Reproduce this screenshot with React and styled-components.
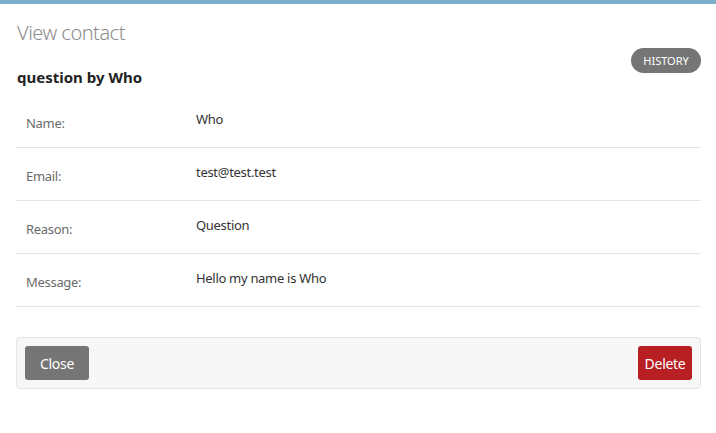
import React from "react";
import styled, { createGlobalStyle } from "styled-components";

const GlobalStyle = createGlobalStyle`
  html, body {
    margin: 0;
    padding: 0;
    background: #ffffff;
  }
  body {
    font-family: "Noto Sans", "Open Sans", sans-serif;
    color: #333333;
  }
`;

const rows = [
  { label: "Name:", value: "Who" },
  { label: "Email:", value: "test@test.test" },
  { label: "Reason:", value: "Question" },
  { label: "Message:", value: "Hello my name is Who" },
];

function App() {
  return (
    <>
      <GlobalStyle />
      <Modal>
        <TopBar />
        <Body>
          <Header>
            <Titles>
              <Title>View contact</Title>
              <Subtitle>question by Who</Subtitle>
            </Titles>
            <PillButton>History</PillButton>
          </Header>
          <Details>
            {rows.map((row) => (
              <Row key={row.label}>
                <Label>{row.label}</Label>
                <Value>{row.value}</Value>
              </Row>
            ))}
          </Details>
          <Footer>
            <Button $width="64px">Close</Button>
            <Button $danger $width="54px">Delete</Button>
          </Footer>
        </Body>
      </Modal>
    </>
  );
}

const Modal = styled.div`
  width: 716px;
  height: 433px;
  background: #ffffff;
`;

const TopBar = styled.div`
  height: 4px;
  background-color: #79aec9;
`;

const Body = styled.div`
  padding: 16px 15px 0 16px;
`;

const Header = styled.div`
  display: flex;
  justify-content: space-between;
  align-items: flex-start;
`;

const Titles = styled.div`
  display: flex;
  flex-direction: column;
  padding-left: 1px;
`;

const Title = styled.h2`
  margin: 0;
  font-size: 20px;
  line-height: 26px;
  font-weight: 300;
  letter-spacing: -0.5px;
  color: #8c8c8c;
`;

const Subtitle = styled.h3`
  margin: 21px 0 0 0;
  font-size: 15px;
  line-height: 20px;
  font-weight: 700;
  color: #222222;
`;

const PillButton = styled.button`
  margin-top: 28px;
  width: 70px;
  height: 25px;
  border: none;
  border-radius: 13px;
  background-color: #757575;
  color: #ffffff;
  font-family: inherit;
  font-size: 11px;
  font-weight: 400;
  text-transform: uppercase;
  padding: 0;
  cursor: pointer;
`;

const Details = styled.div`
  margin-top: 8px;
  display: flex;
  flex-direction: column;
`;

const Row = styled.div`
  display: grid;
  grid-template-columns: 170px 1fr;
  height: 52px;
  border-bottom: 1px solid #e5e5e5;
  font-size: 13px;
  line-height: 20px;
  letter-spacing: -0.3px;
`;

const Label = styled.div`
  padding: 18px 10px 0 10px;
  color: #6b6b6b;
`;

const Value = styled.div`
  padding: 14px 10px 0 10px;
  color: #333333;
`;

const Footer = styled.div`
  margin-top: 30px;
  display: flex;
  justify-content: space-between;
  align-items: center;
  padding: 8px;
  background-color: #f7f7f7;
  border: 1px solid #e4e4e4;
  border-radius: 4px;
`;

const Button = styled.button`
  height: 34px;
  width: ${(p) => p.$width};
  padding: 0;
  border: none;
  border-radius: 3px;
  background-color: ${(p) => (p.$danger ? "#b71f23" : "#757575")};
  color: #ffffff;
  font-family: inherit;
  font-size: 14px;
  letter-spacing: -0.3px;
  cursor: pointer;
`;

export default App;
